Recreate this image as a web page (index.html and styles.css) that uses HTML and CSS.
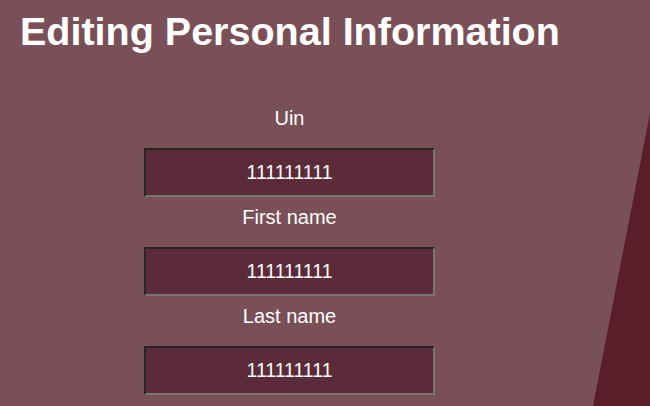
FILE: index.html
```html
<!DOCTYPE html>
<html lang="en">
<head>
<meta charset="utf-8">
<title>Editing Personal Information</title>
<link rel="stylesheet" href="styles.css">
</head>
<body>
<div class="corner"></div>
<h1 class="title">Editing Personal Information</h1>
<form class="form">
  <div class="field">
    <label class="label" for="uin">Uin</label>
    <input class="input" id="uin" type="text" value="111111111">
  </div>
  <div class="field">
    <label class="label" for="first">First name</label>
    <input class="input" id="first" type="text" value="111111111">
  </div>
  <div class="field">
    <label class="label" for="last">Last name</label>
    <input class="input" id="last" type="text" value="111111111">
  </div>
</form>
</body>
</html>
```
FILE: styles.css
```css
html, body {
  margin: 0;
  padding: 0;
  height: 100%;
  overflow: hidden;
}
body {
  background: #7a5058;
  color: #ffffff;
  font-family: "Liberation Sans", Arial, sans-serif;
  position: relative;
}
.corner {
  position: absolute;
  right: 0;
  bottom: 0;
  width: 57px;
  height: 293px;
  background: #5a1e2a;
  clip-path: polygon(100% 0, 100% 100%, 0 100%);
}
.title {
  margin: 0;
  padding: 9px 0 0 20px;
  font-size: 39.5px;
  font-weight: bold;
  line-height: 44px;
}
.form {
  margin: 54px 0 0 144px;
  width: 291px;
  display: flex;
  flex-direction: column;
  gap: 9px;
  position: relative;
}
.field {
  display: flex;
  flex-direction: column;
  align-items: stretch;
}
.label {
  display: block;
  text-align: center;
  font-size: 20px;
  line-height: 23px;
  margin-bottom: 18px;
}
.input {
  box-sizing: border-box;
  width: 291px;
  height: 49px;
  margin: 0;
  padding: 0;
  background: #5c2b3a;
  color: #ffffff;
  font-family: "Liberation Sans", Arial, sans-serif;
  font-size: 19.5px;
  text-align: center;
  border: 2px solid;
  border-color: #262626 #767676 #767676 #262626;
  outline: none;
}
```
